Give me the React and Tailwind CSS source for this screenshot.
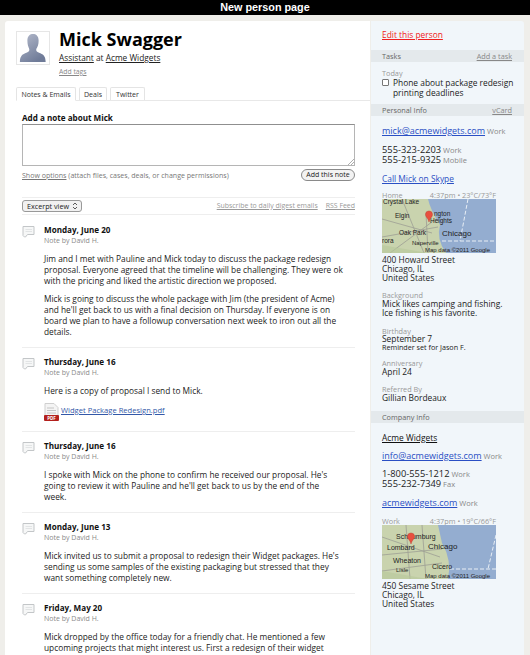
const font = "font-['Open_Sans',sans-serif]";

function NoteIcon() {
  return (
    <svg width="13" height="13" viewBox="0 0 13 13" className="shrink-0">
      <path d="M1 1.500h11v8H5.500L3.500 12H2.500L1 10.500z" fill="#f6f7f7" stroke="#c3c6c8" />
      <path d="M3.500 4.500h6.500M3.500 6.500h6.500" stroke="#e2e4e5" />
    </svg>
  );
}

function Note({ date, children, last }) {
  return (
    <div className={`flex gap-[9px] pt-[9px] ${last ? "" : "pb-[10px] border-b border-[#eeeeee]"}`}>
      <NoteIcon />
      <div className="flex-1 min-w-0 pr-[11px]">
        <div className="font-bold text-[#111] text-[8.1px] leading-[10px]">{date}</div>
        <div className="text-[#8a8a8a] text-[7px] leading-[10px] mt-[1px]">Note by David H.</div>
        {children}
      </div>
    </div>
  );
}

function P({ children }) {
  return <p className="mt-[7px] text-[8.33px] leading-[11px] text-[#222]">{children}</p>;
}

function Band({ left, right }) {
  return (
    <div className="h-[12px] bg-[#e4e9ec] flex items-center justify-between pl-[11px] pr-[12px] text-[7.3px] leading-[12px] text-[#666]">
      <span>{left}</span>
      {right && <span className="underline text-[#888]">{right}</span>}
    </div>
  );
}

function Label({ children }) {
  return <div className="text-[7.3px] leading-[8px] text-[#999]">{children}</div>;
}

function Tag({ children }) {
  return <span className="text-[7.5px] text-[#888]"> {children}</span>;
}

function Link({ children }) {
  return <span className="text-[9px] text-[#2a4fc4] underline">{children}</span>;
}

function Phone({ number, tag }) {
  return <div className="text-[9.3px] leading-[10px]">{number}<Tag>{tag}</Tag></div>;
}

function Map({ variant }) {
  const a = variant === 0;
  return (
    <svg width="114" height="54" viewBox="0 0 114 54" className="block">
      <rect width="114" height="54" fill="#c9d3ae" />
      <path d={a ? "M46 0H114V54H64Q54 40 58 26Q48 10 46 0Z" : "M56 0H114V54H66Q70 35 60 18Z"} fill="#94add0" />
      <path d={a ? "M86 0L78 42M60 42H114" : "M114 10L106 44M68 44H114"} stroke="#e8eef5" strokeWidth="1" strokeDasharray="4 2" fill="none" />
      <path d={a ? "M0 20L50 34M0 38L56 28M20 0L42 54M44 14L46 54M8 54L54 20" : "M0 12L58 32M0 30L60 24M24 0L28 54M40 0L44 54M0 46L60 38"} stroke="#9d9e94" strokeWidth="0.8" fill="none" />
      <path d="M0 46L46 54H0Z" fill="#b8c89a" opacity="0.6" />
      <g fontFamily="Liberation Sans, sans-serif" fill="#222">
        {a ? (
          <>
            <text x="1" y="5" fontSize="6.500">Crystal Lake</text>
            <text x="13" y="19" fontSize="6.500">Elgin</text>
            <text x="52" y="17" fontSize="6.500">ngton</text>
            <text x="48" y="24" fontSize="6.500">Heights</text>
            <text x="17" y="36" fontSize="6.500">Oak Park</text>
            <text x="60" y="37" fontSize="8">Chicago</text>
            <text x="0" y="44" fontSize="6.500">rora</text>
            <text x="30" y="46" fontSize="6">Naperville</text>
            <text x="43" y="53" fontSize="6">Map data ©2011 Google</text>
          </>
        ) : (
          <>
            <text x="14" y="14" fontSize="7">Schaumburg</text>
            <text x="5" y="25" fontSize="7">Lombard</text>
            <text x="46" y="24" fontSize="8">Chicago</text>
            <text x="11" y="38" fontSize="7">Wheaton</text>
            <text x="50" y="44" fontSize="7">Cicero</text>
            <text x="14" y="47" fontSize="6">Lisle</text>
            <text x="43" y="53" fontSize="6">Map data ©2011 Google</text>
          </>
        )}
      </g>
      <g transform={a ? "translate(47 12)" : "translate(29 8)"}>
        <path d="M0 11C-1 7-3.500 6-3.500 3.400A3.500 3.500 0 0 1 3.500 3.400C3.500 6 1 7 0 11Z" fill="#e8503f" stroke="#b93a2c" strokeWidth="0.4" />
      </g>
    </svg>
  );
}

export default function App() {
  return (
    <div className={`${font} w-[530px] h-[655px] overflow-hidden bg-[#efeeea] flex flex-col`}>
      <div className="h-[15px] shrink-0 bg-black text-white text-center font-bold text-[10.8px] leading-[15px] font-['Liberation_Sans',sans-serif]">
        New person page
      </div>
      <div className="flex-1 min-h-0 flex pl-[5px] pr-[6px] pt-[6px]">
        <main className="w-[365px] shrink-0 bg-white rounded-tl-[3px] pl-[17px] pr-[15px] overflow-hidden">
          <div className="flex gap-[9px] pt-[10px] -ml-[6px]">
            <div className="w-[34px] h-[34px] border border-[#e6e6e6] p-[1px]">
              <svg viewBox="0 0 32 32" className="w-full h-full">
                <defs>
                  <linearGradient id="sil" x1="0" y1="0" x2="0.6" y2="1">
                    <stop offset="0" stopColor="#b5bbcc" />
                    <stop offset="1" stopColor="#6f7b98" />
                  </linearGradient>
                </defs>
                <path d="M10 8C10 3 13 1 16 1s6 2 6 7c0 4-1 7-2.500 9-.4 2 .5 3 3 4 4 1.500 7 3 7 10H2c0-7 3-8.500 7-10 2.500-1 3.400-2 3-4C11 15 10 12 10 8Z" fill="url(#sil)" />
              </svg>
            </div>
            <div>
              <h1 className="text-[18px] leading-[22px] font-bold text-black -mt-[3px]">Mick Swagger</h1>
              <div className="text-[8.3px] leading-[11px] mt-[2px] text-[#222]">
                <span className="underline">Assistant</span> at <span className="underline">Acme Widgets</span>
              </div>
              <div className="text-[6.8px] leading-[10px] mt-[4px] text-[#888] underline">Add tags</div>
            </div>
          </div>
          <div className="mt-[10px] -ml-[6px] -mr-[15px] border-b border-[#e8e8e8] h-[14px] flex gap-[3px] text-[7px] leading-[13px] text-[#333]">
            <div className="h-[14px] w-[60px] border border-[#e4e4e4] border-b-white bg-white rounded-t-[2px] text-center whitespace-nowrap">Notes &amp; Emails</div>
            <div className="h-[13px] w-[28px] border border-[#e4e4e4] border-b-0 rounded-t-[2px] text-center">Deals</div>
            <div className="h-[13px] w-[35px] border border-[#e4e4e4] border-b-0 rounded-t-[2px] text-center">Twitter</div>
          </div>

          <div className="mt-[11px] font-bold text-[8.1px] leading-[11px] text-[#111]">Add a note about Mick</div>
          <div className="relative mt-[1px] h-[42px] border border-[#b5b5b5] border-t-[#8f8f8f] bg-white">
            <svg width="7" height="7" className="absolute right-0 bottom-0"><path d="M1 7L7 1M4 7L7 4" stroke="#999" strokeWidth="0.8" /></svg>
          </div>
          <div className="mt-[3px] flex items-center justify-between">
            <div className="text-[7.05px] leading-[12px] text-[#777]"><span className="underline">Show options</span> (attach files, cases, deals, or change permissions)</div>
            <div className="w-[54px] h-[12px] border border-[#8a8a8a] rounded-full bg-[#f3f3f3] text-[7px] leading-[10px] text-center text-[#222] whitespace-nowrap">Add this note</div>
          </div>

          <div className="mt-[16px] border-y border-[#eeeeee] h-[18px] flex items-center justify-between">
            <div className="relative w-[60px] h-[12px] border border-[#999] rounded-[3px] bg-[#f1f1f1] text-[7.2px] leading-[10px] pl-[4px] text-[#222] whitespace-nowrap">
              Excerpt view
              <svg width="6" height="8" className="absolute right-[3px] top-[1px]"><path d="M1 3L3 1L5 3M1 5L3 7L5 5" fill="none" stroke="#333" strokeWidth="0.8" /></svg>
            </div>
            <div className="text-[6.95px] text-[#999] flex gap-[8px] underline">
              <span>Subscribe to daily digest emails</span>
              <span>RSS Feed</span>
            </div>
          </div>

          <div className="pt-[1px]">
            <Note date="Monday, June 20">
              <P>Jim and I met with Pauline and Mick today to discuss the package redesign proposal. Everyone agreed that the timeline will be challenging. They were ok with the pricing and liked the artistic direction we proposed.</P>
              <P>Mick is going to discuss the whole package with Jim (the president of Acme) and he'll get back to us with a final decision on Thursday. If everyone is on board we plan to have a followup conversation next week to iron out all the details.</P>
            </Note>
            <Note date="Thursday, June 16">
              <P>Here is a copy of proposal I send to Mick.</P>
              <div className="mt-[7px] flex gap-[2px]">
                <svg width="15" height="18" viewBox="0 0 15 18" className="shrink-0">
                  <path d="M1 .5H10L14 4.500V17H1Z" fill="#f4f4f4" stroke="#cfcfcf" />
                  <path d="M3 5h7M3 7.500h9M3 10h9" stroke="#c4c4c4" />
                  <rect y="12" width="15" height="6" rx="1" fill="#b3201c" />
                  <text x="7.500" y="17" fontSize="4.500" fontWeight="bold" fill="#fff" textAnchor="middle">PDF</text>
                </svg>
                <span className="text-[7.6px] leading-[11px] mt-[2px] text-[#3358a8] underline">Widget Package Redesign.pdf</span>
              </div>
            </Note>
            <Note date="Thursday, June 16">
              <P>I spoke with Mick on the phone to confirm he received our proposal. He's going to review it with Pauline and he'll get back to us by the end of the<br />week.</P>
            </Note>
            <Note date="Monday, June 13">
              <P>Mick invited us to submit a proposal to redesign their Widget packages. He's sending us some samples of the existing packaging but stressed that they want something completely new.</P>
            </Note>
            <Note date="Friday, May 20" last>
              <P>Mick dropped by the office today for a friendly chat. He mentioned a few upcoming projects that might interest us. First a redesign of their widget packages and later this year a set of new brochures and a marketing website.</P>
            </Note>
          </div>
        </main>

        <aside className="ml-[1px] w-[153px] shrink-0 bg-[#f1f6fa] rounded-tr-[3px] text-[8.4px] leading-[9px] text-[#222] overflow-hidden">
          <div className="pl-[11px] h-[29px] pt-[9px] text-[#f02020] underline leading-[10px]">Edit this person</div>
          <Band left="Tasks" right="Add a task" />
          <div className="pl-[11px] pr-[6px] pt-[7px] h-[42px]">
            <Label>Today</Label>
            <div className="flex gap-[4px] mt-[1px]">
              <div className="w-[7px] h-[7px] mt-[1px] border border-[#777] rounded-[1px] bg-white shrink-0" />
              <div className="leading-[10px]">Phone about package redesign printing deadlines</div>
            </div>
          </div>
          <Band left="Personal Info" right="vCard" />
          <div className="pl-[11px] pr-[10px] pt-[10px]">
            <div><Link>mick@acmewidgets.com</Link><Tag>Work</Tag></div>
            <div className="mt-[9px]"><Phone number="555-323-2203" tag="Work" /></div>
            <Phone number="555-215-9325" tag="Mobile" />
            <div className="mt-[9px] text-[#2a4fc4] underline">Call Mick on Skype</div>
            <div className="mt-[8px] flex justify-between w-[114px] text-[7.3px] text-[#999] leading-[8px]"><span>Home</span><span>4:37pm • 23°C/73°F</span></div>
            <Map variant={0} />
            <div className="mt-[2px]">400 Howard Street</div>
            <div>Chicago, IL</div>
            <div>United States</div>
            <div className="mt-[9px]"><Label>Background</Label></div>
            <div>Mick likes camping and fishing. Ice fishing is his favorite.</div>
            <div className="mt-[10px]"><Label>Birthday</Label></div>
            <div className="-mt-[1px]">September 7</div>
            <div className="text-[7.2px]">Reminder set for Jason F.</div>
            <div className="mt-[7px]"><Label>Anniversary</Label></div>
            <div>April 24</div>
            <div className="mt-[9px]"><Label>Referred By</Label></div>
            <div>Gillian Bordeaux</div>
          </div>
          <div className="mt-[9px]"><Band left="Company Info" /></div>
          <div className="pl-[11px] pr-[10px] pt-[10px]">
            <div className="underline text-[#111]">Acme Widgets</div>
            <div className="mt-[9px]"><Link>info@acmewidgets.com</Link><Tag>Work</Tag></div>
            <div className="mt-[8px]"><Phone number="1-800-555-1212" tag="Work" /></div>
            <Phone number="555-232-7349" tag="Fax" />
            <div className="mt-[9px]"><Link>acmewidgets.com</Link><Tag>Work</Tag></div>
            <div className="mt-[9px] flex justify-between w-[114px] text-[7.3px] text-[#999] leading-[8px]"><span>Work</span><span>4:37pm • 19°C/66°F</span></div>
            <Map variant={1} />
            <div className="mt-[2px]">450 Sesame Street</div>
            <div>Chicago, IL</div>
            <div>United States</div>
          </div>
        </aside>
      </div>
    </div>
  );
}
